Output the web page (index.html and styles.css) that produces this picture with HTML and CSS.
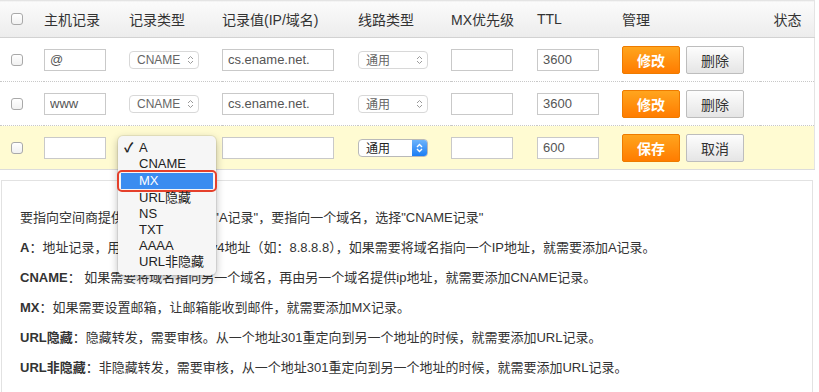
FILE: index.html
```html
<!DOCTYPE html>
<html lang="zh-CN">
<head>
  <meta charset="UTF-8">
  <meta name="viewport" content="width=device-width, initial-scale=1.0">
  <title>域名解析记录</title>
  <link rel="stylesheet" href="styles.css">
</head>
<body>
  <!-- Records table -->
  <table class="records">
    <colgroup>
      <col style="width: 44px">
      <col style="width: 85px">
      <col style="width: 93px">
      <col style="width: 136px">
      <col style="width: 93px">
      <col style="width: 86px">
      <col style="width: 85px">
      <col style="width: 138px">
      <col style="width: 54px">
    </colgroup>
    <thead>
      <tr>
        <th class="c-check"><span class="checkbox"></span></th>
        <th>主机记录</th>
        <th>记录类型</th>
        <th>记录值(IP/域名)</th>
        <th>线路类型</th>
        <th>MX优先级</th>
        <th>TTL</th>
        <th>管理</th>
        <th class="c-status">状态</th>
      </tr>
    </thead>
    <tbody>
      <tr>
        <td class="c-check"><span class="checkbox"></span></td>
        <td><input class="text w-short" type="text" value="@" readonly></td>
        <td><span class="pick">CNAME <svg class="updown" viewBox="0 0 7 10"><path d="M1 4 L3.5 1.5 L6 4 M1 6 L3.5 8.5 L6 6"/></svg></span></td>
        <td><input class="text w-long" type="text" value="cs.ename.net." readonly></td>
        <td><span class="pick">通用 <svg class="updown" viewBox="0 0 7 10"><path d="M1 4 L3.5 1.5 L6 4 M1 6 L3.5 8.5 L6 6"/></svg></span></td>
        <td><input class="text w-short" type="text" value="" readonly></td>
        <td><input class="text w-short" type="text" value="3600" readonly></td>
        <td>
          <div class="actions">
            <button class="btn btn-primary">修改</button>
            <button class="btn btn-default">删除</button>
          </div>
        </td>
        <td></td>
      </tr>
      <tr>
        <td class="c-check"><span class="checkbox"></span></td>
        <td><input class="text w-short" type="text" value="www" readonly></td>
        <td><span class="pick">CNAME <svg class="updown" viewBox="0 0 7 10"><path d="M1 4 L3.5 1.5 L6 4 M1 6 L3.5 8.5 L6 6"/></svg></span></td>
        <td><input class="text w-long" type="text" value="cs.ename.net." readonly></td>
        <td><span class="pick">通用 <svg class="updown" viewBox="0 0 7 10"><path d="M1 4 L3.5 1.5 L6 4 M1 6 L3.5 8.5 L6 6"/></svg></span></td>
        <td><input class="text w-short" type="text" value="" readonly></td>
        <td><input class="text w-short" type="text" value="3600" readonly></td>
        <td>
          <div class="actions">
            <button class="btn btn-primary">修改</button>
            <button class="btn btn-default">删除</button>
          </div>
        </td>
        <td></td>
      </tr>
      <tr class="editing">
        <td class="c-check"><span class="checkbox"></span></td>
        <td><input class="text w-short" type="text" value="" readonly></td>
        <td>
          <div class="pick-wrap">
            <span class="pick">A <svg class="updown" viewBox="0 0 7 10"><path d="M1 4 L3.5 1.5 L6 4 M1 6 L3.5 8.5 L6 6"/></svg></span>
            <!-- open dropdown -->
            <ul class="menu">
              <li class="checked">A</li>
              <li>CNAME</li>
              <li class="hl">MX</li>
              <li>URL隐藏</li>
              <li>NS</li>
              <li>TXT</li>
              <li>AAAA</li>
              <li>URL非隐藏</li>
            </ul>
          </div>
        </td>
        <td><input class="text w-long" type="text" value="" readonly></td>
        <td><span class="pick active">通用 <span class="arrow-box"><svg class="updown" viewBox="0 0 7 10"><path d="M1 4 L3.5 1.5 L6 4 M1 6 L3.5 8.5 L6 6"/></svg></span></span></td>
        <td><input class="text w-short" type="text" value="" readonly></td>
        <td><input class="text w-short" type="text" value="600" readonly></td>
        <td>
          <div class="actions">
            <button class="btn btn-primary">保存</button>
            <button class="btn btn-default">取消</button>
          </div>
        </td>
        <td></td>
      </tr>
    </tbody>
  </table>

  <!-- Help text -->
  <div class="tips">
    <p>要指向空间商提供的IP地址，选择"A记录"，要指向一个域名，选择"CNAME记录"</p>
    <p><b>A</b>：地址记录，用来指定域名的IPv4地址（如：8.8.8.8），如果需要将域名指向一个IP地址，就需要添加A记录。</p>
    <p><b>CNAME</b>： 如果需要将域名指向另一个域名，再由另一个域名提供ip地址，就需要添加CNAME记录。</p>
    <p><b>MX</b>：如果需要设置邮箱，让邮箱能收到邮件，就需要添加MX记录。</p>
    <p><b>URL隐藏</b>：隐藏转发，需要审核。从一个地址301重定向到另一个地址的时候，就需要添加URL记录。</p>
    <p><b>URL非隐藏</b>：非隐藏转发，需要审核，从一个地址301重定向到另一个地址的时候，就需要添加URL记录。</p>
  </div>
</body>
</html>
```

FILE: styles.css
```css
/* General */
body {
  margin: 0;
  font-family: "Liberation Sans", "Noto Sans CJK SC", sans-serif;
  color: #333;
  background: #fff;
}

/* Records table */
.records {
  width: 814px;
  table-layout: fixed;
  border-collapse: collapse;
  border-top: 1px solid #e4e4e4;
  border-right: 1px solid #e4e4e4;
}

.records th {
  height: 36px;
  padding: 0;
  background: linear-gradient(#fbfbfb, #ececec);
  border-bottom: 1px solid #d2d2d2;
  font-size: 14px;
  font-weight: normal;
  text-align: left;
  color: #333;
}

.records td {
  height: 43px;
  padding: 0;
  border-bottom: 1px dotted #c8c8c8;
  vertical-align: middle;
}

.records tr.editing td {
  background: #fffbd2;
  border-bottom: 1px solid #dcdcdc;
}

.records .c-check {
  padding-left: 11px;
}

.records .c-status {
  text-align: right;
  padding-right: 12px;
}

.checkbox {
  display: block;
  width: 12px;
  height: 12px;
  box-sizing: border-box;
  border: 1px solid #a9a9a9;
  border-radius: 3px;
  background: linear-gradient(#ffffff, #f1f1f1);
}

/* Inputs */
.text {
  display: block;
  box-sizing: border-box;
  height: 22px;
  padding: 0 5px;
  border: 1px solid #c9c9c9;
  background: #fff;
  font-family: "Liberation Sans", "Noto Sans CJK SC", sans-serif;
  font-size: 13px;
  color: #555;
  outline: none;
}

.w-short {
  width: 62px;
}

.w-long {
  width: 112px;
}

/* Fake selects */
.pick {
  display: flex;
  align-items: center;
  justify-content: space-between;
  box-sizing: border-box;
  width: 70px;
  height: 18px;
  padding: 0 4px 0 7px;
  border: 1px solid #d8d8d8;
  border-radius: 4px;
  background: #fff;
  font-size: 12px;
  color: #666;
}

.updown {
  width: 7px;
  height: 10px;
  fill: none;
  stroke: #9a9a9a;
  stroke-width: 1;
}

.pick.active {
  padding-right: 0;
  border-color: #b9b9b9;
  color: #222;
  overflow: hidden;
}

.arrow-box {
  display: flex;
  align-items: center;
  justify-content: center;
  width: 15px;
  height: 100%;
  background: linear-gradient(#6db4fb, #1b7df4);
}

.arrow-box .updown {
  stroke: #fff;
  stroke-width: 1.4;
}

.pick-wrap {
  position: relative;
}

/* Open dropdown menu */
.menu {
  position: absolute;
  left: -11px;
  top: -3px;
  z-index: 2;
  width: 98px;
  margin: 0;
  padding: 4px 0 5px;
  list-style: none;
  background: #f6f6f6;
  border-radius: 5px;
  box-shadow: 0 3px 9px rgba(0, 0, 0, 0.28), 0 0 0 1px rgba(0, 0, 0, 0.07);
  font-size: 13px;
  color: #222;
}

.menu li {
  position: relative;
  height: 16px;
  line-height: 16px;
  padding-left: 21px;
}

.menu li.checked::before {
  content: "✓";
  position: absolute;
  left: 6px;
  font-weight: bold;
}

.menu li.hl {
  margin: 1px 3px;
  padding-left: 18px;
  background: #3a8cf0;
  color: #fff;
}

.menu li.hl::after {
  content: "";
  position: absolute;
  inset: -3px -4px;
  border: 2.5px solid #e5402b;
  border-radius: 5px;
}

/* Buttons */
.actions {
  display: flex;
  gap: 6px;
}

.btn {
  box-sizing: border-box;
  width: 58px;
  height: 28px;
  border-radius: 2px;
  font-family: "Liberation Sans", "Noto Sans CJK SC", sans-serif;
  font-size: 14px;
  cursor: pointer;
}

.btn-primary {
  background: linear-gradient(#ffa51e, #ff7c00);
  border: 1px solid #ee7b00;
  color: #fff;
  font-weight: bold;
}

.btn-default {
  background: linear-gradient(#fdfdfd, #e5e5e5);
  border: 1px solid #bdbdbd;
  color: #333;
}

/* Help text */
.tips {
  width: 812px;
  box-sizing: border-box;
  margin: 10px 0 0 1px;
  padding: 22px 18px 19px;
  border: 1px solid #e2e2e2;
  font-size: 13px;
  color: #333;
}

.tips p {
  margin: 0;
  line-height: 30px;
}
```
